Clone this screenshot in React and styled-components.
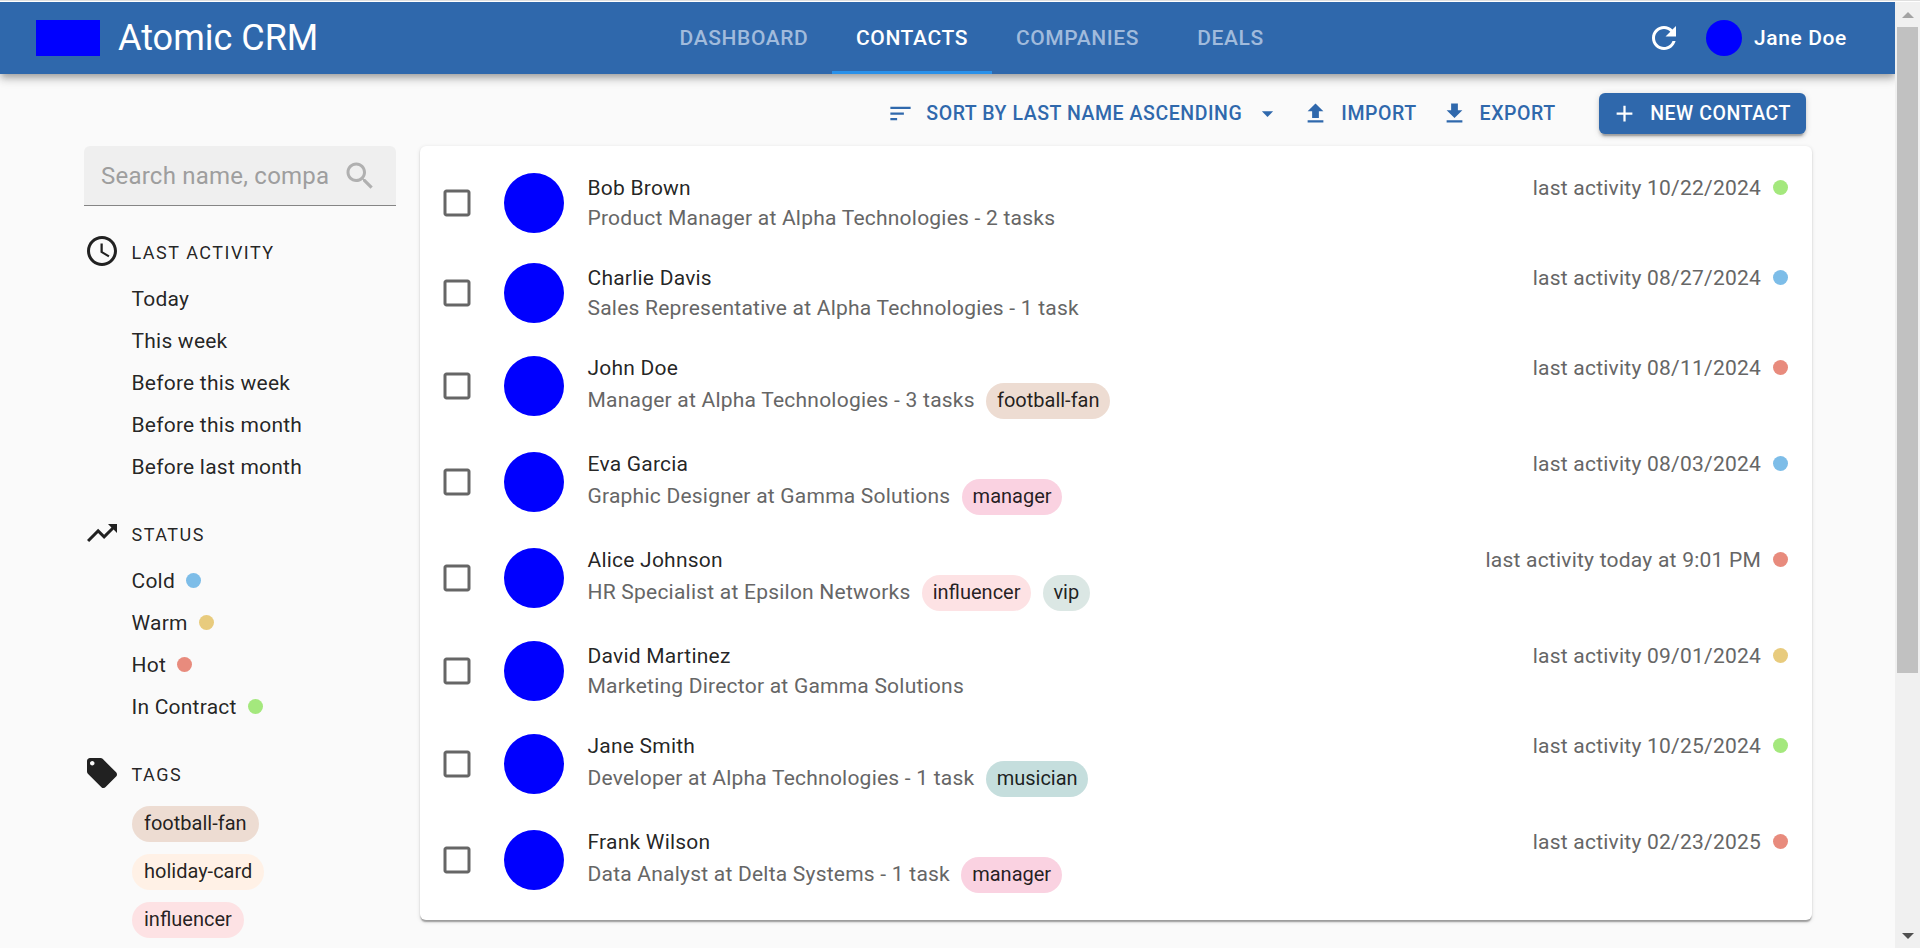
import React from "react";
import styled, { createGlobalStyle } from "styled-components";

const GlobalStyle = createGlobalStyle`
  *, *::before, *::after { box-sizing: border-box; }
  body {
    margin: 0;
    background: #fafafa;
    color: rgba(0, 0, 0, 0.87);
    font-family: Roboto, "Liberation Sans", sans-serif;
    font-size: 21px;
    overflow: hidden;
  }
`;

const Window = styled.div`
  display: flex;
  width: 1920px;
  height: 948px;
  overflow: hidden;
  border-top: 1px solid #dfdfdf;
  padding-top: 1px;
  background: #fff;
`;

const Page = styled.div`
  width: 1895px;
  flex: none;
  overflow: hidden;
  background: #fafafa;
`;

const Header = styled.header`
  position: relative;
  display: flex;
  justify-content: space-between;
  align-items: center;
  height: 72px;
  padding: 0 36px;
  background: #2f68ac;
  color: #fff;
  box-shadow: 0 3px 6px -1.5px rgba(0, 0, 0, 0.2), 0 6px 7.5px 0 rgba(0, 0, 0, 0.14),
    0 1.5px 15px 0 rgba(0, 0, 0, 0.12);
`;

const Brand = styled.div`
  display: flex;
  align-items: center;
  gap: 18px;
  width: 284px;
`;

const Logo = styled.div`
  width: 64px;
  height: 36px;
  background: #0000ff;
`;

const BrandName = styled.h1`
  margin: 0;
  font-size: 36px;
  font-weight: 400;
  line-height: 48px;
  white-space: nowrap;
`;

const Tabs = styled.nav`
  display: flex;
  align-self: stretch;
`;

const Tab = styled.a`
  display: flex;
  align-items: center;
  justify-content: center;
  width: ${(p) => p.$width}px;
  border-bottom: 3px solid ${(p) => (p.$active ? "#2a91ea" : "transparent")};
  padding-top: 3px;
  color: ${(p) => (p.$active ? "#fff" : "#a1bbdc")};
  font-weight: 500;
  letter-spacing: 0.02857em;
  text-transform: uppercase;
`;

const UserArea = styled.div`
  display: flex;
  align-items: center;
  width: 225px;
  padding-left: 12px;
`;

const UserAvatar = styled.div`
  width: 36px;
  height: 36px;
  margin: 0 12px 0 24px;
  border-radius: 50%;
  background: #0000ff;
`;

const UserName = styled.span`
  font-weight: 500;
  letter-spacing: 0.02857em;
  white-space: nowrap;
`;

const Toolbar = styled.div`
  display: flex;
  justify-content: flex-end;
  align-items: center;
  gap: 12px;
  height: 72px;
  padding: 7px 89px 0 0;
`;

const ToolButton = styled.button`
  display: flex;
  align-items: center;
  gap: 12px;
  height: 41px;
  padding: 0 7.5px 0 4.5px;
  border: 0;
  background: none;
  color: #2f68ac;
  font: 500 19.5px Roboto, sans-serif;
  letter-spacing: 0.02857em;
  text-transform: uppercase;
  white-space: nowrap;
`;

const SortButton = styled(ToolButton)`
  padding-right: 4.5px;
`;

const PrimaryButton = styled(ToolButton)`
  margin-left: 24px;
  padding: 0 15px 0 12px;
  border-radius: 6px;
  background: #2f68ac;
  color: #fff;
  box-shadow: 0 4.5px 1.5px -3px rgba(0, 0, 0, 0.2), 0 3px 3px 0 rgba(0, 0, 0, 0.14),
    0 1.5px 7.5px 0 rgba(0, 0, 0, 0.12);
`;

const Content = styled.div`
  display: flex;
  align-items: flex-start;
  gap: 24px;
  padding: 0 83px 0 84px;
`;

const Sidebar = styled.aside`
  width: 312px;
  flex: none;
`;

const SearchBox = styled.div`
  display: flex;
  align-items: center;
  height: 60px;
  margin-bottom: 27px;
  padding: 0 18px 0 17px;
  border-bottom: 1px solid #858585;
  border-radius: 6px 6px 0 0;
  background: #efefef;
  color: #b0b0b0;
`;

const SearchInput = styled.input`
  width: 228px;
  margin-right: 13px;
  padding: 0;
  border: 0;
  outline: 0;
  background: none;
  font: 400 24px Roboto, sans-serif;
  letter-spacing: 0.00938em;
  &::placeholder { color: #9e9e9e; opacity: 1; }
`;

const Section = styled.section`
  margin-bottom: 27px;
`;

const SectionTitle = styled.h2`
  display: flex;
  align-items: center;
  gap: 11.5px;
  height: 36px;
  margin: 0;
  font-size: 18px;
  font-weight: 400;
  letter-spacing: 0.08333em;
  text-transform: uppercase;
  span { padding-top: 2px; }
`;

const FilterList = styled.div`
  padding: 9px 0 0 47.5px;
`;

const FilterItem = styled.div`
  display: flex;
  align-items: center;
  gap: 11px;
  height: 42px;
  letter-spacing: 0.01071em;
`;

const TagList = styled.div`
  display: flex;
  flex-direction: column;
  align-items: flex-start;
  gap: 12px;
  padding: 15px 0 0 48px;
`;

const Dot = styled.span`
  width: 15px;
  height: 15px;
  flex: none;
  margin-bottom: 1px;
  border-radius: 50%;
  background: ${(p) => p.$color};
`;

const Chip = styled.span`
  display: inline-flex;
  align-items: center;
  height: 36px;
  padding: 0 ${(p) => (p.$compact ? 10.7 : 12)}px 2px;
  border-radius: 18px;
  background: ${(p) => p.$color};
  color: rgba(0, 0, 0, 0.87);
  font-size: 20px;
  letter-spacing: 0;
  white-space: nowrap;
`;

const Card = styled.main`
  flex: 1;
  padding: 12px 0;
  border-radius: 6px;
  background: #fff;
  box-shadow: 0 3px 1.5px -1.5px rgba(0, 0, 0, 0.2), 0 1.5px 1.5px 0 rgba(0, 0, 0, 0.14),
    0 1.5px 4.5px 0 rgba(0, 0, 0, 0.12);
`;

const Row = styled.div`
  display: flex;
  align-items: center;
  height: ${(p) => (p.$tagged ? 96 : 90)}px;
  padding: 0 24px 0 19px;
  letter-spacing: 0.01071em;
`;

const CheckIcon = styled.span`
  display: flex;
  color: #666;
`;

const Avatar = styled.div`
  width: 60px;
  height: 60px;
  margin: 0 23.5px 0 29px;
  flex: none;
  border-radius: 50%;
  background: #0000ff;
`;

const Details = styled.div`
  flex: 1;
  align-self: stretch;
  padding-top: 15px;
`;

const Name = styled.div`
  height: 30px;
  line-height: 30px;
`;

const Summary = styled.div`
  display: flex;
  align-items: center;
  gap: 11.5px;
  height: ${(p) => (p.$tagged ? 36 : 30)}px;
  color: #666;
  white-space: nowrap;
`;

const SummaryText = styled.span`
  padding-bottom: ${(p) => (p.$tagged ? 2 : 0)}px;
`;

const Activity = styled.div`
  display: flex;
  align-self: flex-start;
  align-items: center;
  gap: 12px;
  height: 30px;
  margin-top: 15px;
  color: #666;
  white-space: nowrap;
`;

const Scrollbar = styled.div`
  display: flex;
  flex-direction: column;
  align-items: center;
  width: 25px;
  padding: 10px 2px 9px;
  background: #f0f0f0;
`;

const Thumb = styled.div`
  width: 21px;
  height: 646px;
  margin: 9px 0 auto;
  background: #c1c1c1;
`;

const Icon = ({ d, size = 36 }) => (
  <svg width={size} height={size} viewBox="0 0 24 24" fill="currentColor">
    <path d={d} />
  </svg>
);

const icons = {
  refresh:
    "M17.65 6.35C16.2 4.9 14.21 4 12 4c-4.42 0-7.99 3.58-7.99 8s3.57 8 7.99 8c3.73 0 6.84-2.55 7.73-6h-2.08c-.82 2.33-3.04 4-5.65 4-3.31 0-6-2.69-6-6s2.69-6 6-6c1.66 0 3.14.69 4.22 1.78L13 11h7V4l-2.35 2.35z",
  sort: "M3 18h6v-2H3v2zM3 6v2h18V6H3zm0 7h12v-2H3v2z",
  down: "m7 10 5 5 5-5z",
  upload: "M5 20h14v-2H5v2zm0-10h4v6h6v-6h4l-7-7-7 7z",
  download: "M19 9h-4V3H9v6H5l7 7 7-7zM5 18v2h14v-2H5z",
  add: "M19 13h-6v6h-2v-6H5v-2h6V5h2v6h6v2z",
  search:
    "M15.5 14h-.79l-.28-.27C15.41 12.59 16 11.11 16 9.5 16 5.91 13.09 3 9.5 3S3 5.91 3 9.5 5.91 16 9.5 16c1.61 0 3.09-.59 4.23-1.57l.27.28v.79l5 4.99L20.49 19l-4.99-5zm-6 0C7.01 14 5 11.99 5 9.5S7.01 5 9.5 5 14 7.01 14 9.5 11.99 14 9.5 14z",
  clock:
    "M11.99 2C6.47 2 2 6.48 2 12s4.47 10 9.99 10C17.52 22 22 17.52 22 12S17.52 2 11.99 2zM12 20c-4.42 0-8-3.58-8-8s3.58-8 8-8 8 3.58 8 8-3.58 8-8 8zm.5-13H11v6l5.25 3.15.75-1.23-4.5-2.67z",
  trending: "m16 6 2.29 2.29-4.88 4.88-4-4L2 16.59 3.41 18l6-6 4 4 6.3-6.29L22 12V6z",
  tag: "m21.41 11.58-9-9C12.05 2.22 11.55 2 11 2H4c-1.1 0-2 .9-2 2v7c0 .55.22 1.05.59 1.42l9 9c.36.36.86.58 1.41.58.55 0 1.05-.22 1.41-.59l7-7c.37-.36.59-.86.59-1.41 0-.55-.23-1.06-.59-1.42zM5.5 7C4.67 7 4 6.33 4 5.5S4.67 4 5.5 4 7 4.67 7 5.5 6.33 7 5.5 7z",
  checkbox:
    "M19 5v14H5V5h14m0-2H5c-1.1 0-2 .9-2 2v14c0 1.1.9 2 2 2h14c1.1 0 2-.9 2-2V5c0-1.1-.9-2-2-2z",
};

const statusColors = {
  cold: "#7dbde8",
  warm: "#e8cb7d",
  hot: "#e88b7d",
  contract: "#a4e87d",
};

const tagColors = {
  "football-fan": "#eddcd2",
  "holiday-card": "#fff1e6",
  influencer: "#fde2e4",
  manager: "#fad2e1",
  musician: "#c5dedd",
  vip: "#dbe7e4",
};

const tabs = [
  ["Dashboard", 176],
  ["Contacts", 160],
  ["Companies", 171],
  ["Deals", 135],
];

const periods = ["Today", "This week", "Before this week", "Before this month", "Before last month"];

const statuses = [
  ["Cold", "cold"],
  ["Warm", "warm"],
  ["Hot", "hot"],
  ["In Contract", "contract"],
];

const contacts = [
  { name: "Bob Brown", summary: "Product Manager at Alpha Technologies - 2 tasks", tags: [], seen: "10/22/2024", status: "contract" },
  { name: "Charlie Davis", summary: "Sales Representative at Alpha Technologies - 1 task", tags: [], seen: "08/27/2024", status: "cold" },
  { name: "John Doe", summary: "Manager at Alpha Technologies - 3 tasks", tags: ["football-fan"], seen: "08/11/2024", status: "hot" },
  { name: "Eva Garcia", summary: "Graphic Designer at Gamma Solutions", tags: ["manager"], seen: "08/03/2024", status: "cold" },
  { name: "Alice Johnson", summary: "HR Specialist at Epsilon Networks", tags: ["influencer", "vip"], seen: "today at 9:01 PM", status: "hot" },
  { name: "David Martinez", summary: "Marketing Director at Gamma Solutions", tags: [], seen: "09/01/2024", status: "warm" },
  { name: "Jane Smith", summary: "Developer at Alpha Technologies - 1 task", tags: ["musician"], seen: "10/25/2024", status: "contract" },
  { name: "Frank Wilson", summary: "Data Analyst at Delta Systems - 1 task", tags: ["manager"], seen: "02/23/2025", status: "hot" },
];

const Tag = ({ name, compact }) => (
  <Chip $color={tagColors[name]} $compact={compact}>
    {name}
  </Chip>
);

const ContactRow = ({ contact }) => {
  const tagged = contact.tags.length > 0;
  return (
    <Row $tagged={tagged}>
      <CheckIcon>
        <Icon d={icons.checkbox} />
      </CheckIcon>
      <Avatar />
      <Details>
        <Name>{contact.name}</Name>
        <Summary $tagged={tagged}>
          <SummaryText $tagged={tagged}>{contact.summary}</SummaryText>
          {contact.tags.map((t) => (
            <Tag key={t} name={t} compact />
          ))}
        </Summary>
      </Details>
      <Activity>
        <span>last activity {contact.seen}</span>
        <Dot $color={statusColors[contact.status]} />
      </Activity>
    </Row>
  );
};

export default function App() {
  return (
    <>
      <GlobalStyle />
      <Window>
        <Page>
          <Header>
            <Brand>
              <Logo />
              <BrandName>Atomic CRM</BrandName>
            </Brand>
            <Tabs>
              {tabs.map(([label, width]) => (
                <Tab key={label} $width={width} $active={label === "Contacts"}>
                  {label}
                </Tab>
              ))}
            </Tabs>
            <UserArea>
              <Icon d={icons.refresh} />
              <UserAvatar />
              <UserName>Jane Doe</UserName>
            </UserArea>
          </Header>
          <Toolbar>
            <SortButton>
              <Icon d={icons.sort} size={27} />
              Sort by last name ascending
              <Icon d={icons.down} size={27} />
            </SortButton>
            <ToolButton>
              <Icon d={icons.upload} size={27} />
              Import
            </ToolButton>
            <ToolButton>
              <Icon d={icons.download} size={27} />
              Export
            </ToolButton>
            <PrimaryButton>
              <Icon d={icons.add} size={27} />
              New Contact
            </PrimaryButton>
          </Toolbar>
          <Content>
            <Sidebar>
              <SearchBox>
                <SearchInput placeholder="Search name, company..." />
                <Icon d={icons.search} />
              </SearchBox>
              <Section>
                <SectionTitle>
                  <Icon d={icons.clock} />
                  <span>Last activity</span>
                </SectionTitle>
                <FilterList>
                  {periods.map((p) => (
                    <FilterItem key={p}>{p}</FilterItem>
                  ))}
                </FilterList>
              </Section>
              <Section>
                <SectionTitle>
                  <Icon d={icons.trending} />
                  <span>Status</span>
                </SectionTitle>
                <FilterList>
                  {statuses.map(([label, key]) => (
                    <FilterItem key={key}>
                      {label}
                      <Dot $color={statusColors[key]} />
                    </FilterItem>
                  ))}
                </FilterList>
              </Section>
              <Section>
                <SectionTitle>
                  <Icon d={icons.tag} />
                  <span>Tags</span>
                </SectionTitle>
                <TagList>
                  <Tag name="football-fan" />
                  <Tag name="holiday-card" />
                  <Tag name="influencer" />
                </TagList>
              </Section>
            </Sidebar>
            <Card>
              {contacts.map((c) => (
                <ContactRow key={c.name} contact={c} />
              ))}
            </Card>
          </Content>
        </Page>
        <Scrollbar>
          <svg width="12" height="6" viewBox="0 0 12 6" fill="#a3a3a3">
            <path d="M0 6 6 0l6 6z" />
          </svg>
          <Thumb />
          <svg width="12" height="6" viewBox="0 0 12 6" fill="#505050">
            <path d="M0 0h12L6 6z" />
          </svg>
        </Scrollbar>
      </Window>
    </>
  );
}
